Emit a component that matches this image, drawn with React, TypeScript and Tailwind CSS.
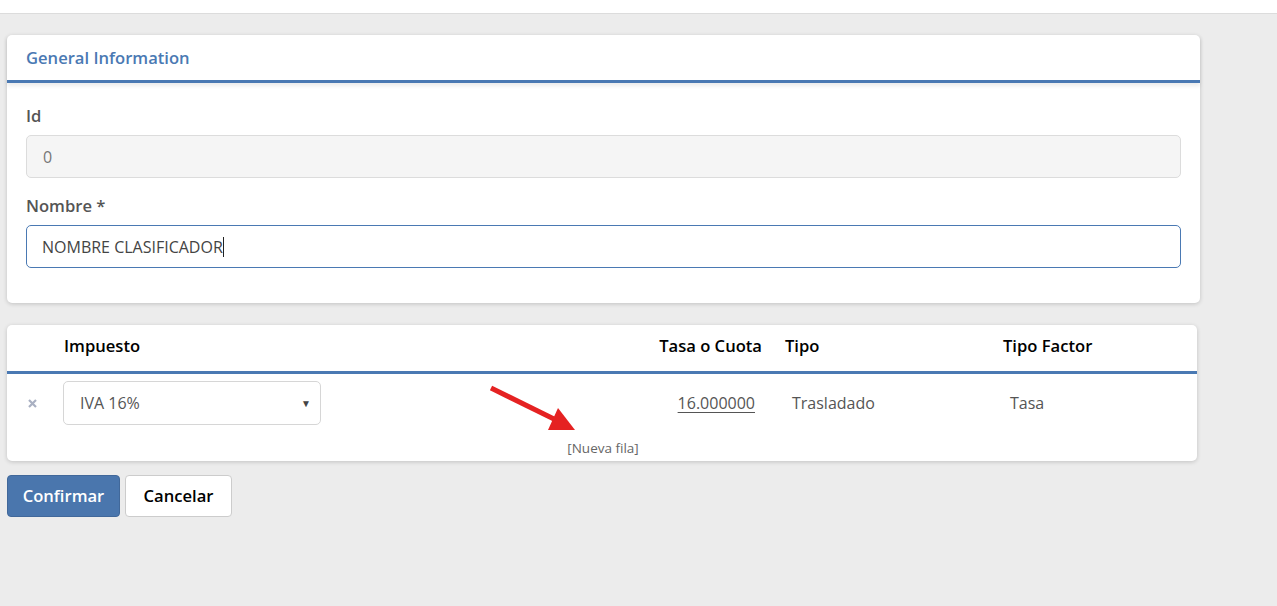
import React from "react";

const font = { fontFamily: "'Open Sans', 'Noto Sans', sans-serif" };

const App: React.FC = () => {
  return (
    <div className="min-h-[606px] bg-[#ececec] text-[#555]" style={font}>
      {/* top bar */}
      <div className="h-[14px] bg-white border-b border-[#dcdcdc]" />

      <div className="pl-[7px] pt-[21px]">
        {/* General Information card */}
        <div className="w-[1193px] bg-white rounded-[5px] shadow-[0_1px_4px_rgba(0,0,0,0.18)]">
          <div className="h-[48px] px-[19px] pt-[11px] border-b-[3px] border-[#4a79b3] shadow-[0_3px_4px_rgba(0,0,0,0.08)]">
            <h1 className="text-[16.6px] font-semibold text-[#4a79b3]">General Information</h1>
          </div>
          <div className="px-[19px] pt-[22px] pb-[35px]">
            <label className="block text-[16.6px] font-semibold leading-[22px]">Id</label>
            <div className="mt-[8px] h-[43px] rounded-[5px] border border-[#dcdcdc] bg-[#f5f5f5] flex items-center px-[16px] text-[16px] text-[#777]">
              0
            </div>
            <label className="block mt-[17px] text-[16.6px] font-semibold leading-[22px]">Nombre *</label>
            <div className="mt-[8px] h-[43px] rounded-[5px] border border-[#4a79b3] bg-white flex items-center px-[15px] text-[16px] text-[#444]">
              NOMBRE CLASIFICADOR
              <span className="inline-block w-px h-[20px] bg-[#222]" />
            </div>
          </div>
        </div>

        {/* Impuestos table card */}
        <div className="relative mt-[22px] w-[1190px] bg-white rounded-[5px] shadow-[0_1px_4px_rgba(0,0,0,0.18)]">
          <div className="h-[49px] flex items-center border-b-[3px] border-[#4a79b3] text-[16.6px] font-semibold text-black pb-[3px]">
            <div className="w-[57px]" />
            <div className="w-[578px]">Impuesto</div>
            <div className="w-[120px] text-right">Tasa o Cuota</div>
            <div className="w-[23px]" />
            <div className="w-[218px]">Tipo</div>
            <div>Tipo Factor</div>
          </div>
          <div className="pt-[7px] flex items-center text-[16px]">
            <div className="w-[50px] flex justify-center">
              <svg width="9" height="9" viewBox="0 0 9 9">
                <path d="M1 1 L8 8 M8 1 L1 8" stroke="#a9b0c2" strokeWidth="2.2" />
              </svg>
            </div>
            <div className="ml-[6px] w-[258px] h-[44px] rounded-[5px] border border-[#d6d6d6] flex items-center justify-between pl-[16px] pr-[9px]">
              <span className="text-[#555]">IVA 16%</span>
              <span className="text-[10px] text-[#444]">▼</span>
            </div>
            <div className="w-[434px] text-right">
              <span className="underline underline-offset-[3px]">16.000000</span>
            </div>
            <div className="w-[37px]" />
            <div className="w-[218px]">Trasladado</div>
            <div>Tasa</div>
          </div>
          <div className="h-[36px] flex items-end justify-center pb-[3px] text-[13.5px] text-[#666] pl-[2px]">
            [Nueva fila]
          </div>

          {/* red annotation arrow */}
          <svg
            className="absolute left-[473px] top-[58px]"
            width="110"
            height="60"
            viewBox="0 0 110 60"
          >
            <line x1="11" y1="5" x2="76" y2="37" stroke="#e52222" strokeWidth="5" />
            <polygon points="78,25 68,47 95,47" fill="#e52222" />
          </svg>
        </div>

        {/* buttons */}
        <div className="mt-[14px] flex gap-[5px]">
          <button className="w-[113px] h-[42px] rounded-[4px] bg-[#4a76ad] border border-[#41689a] text-white text-[16.6px] font-semibold">
            Confirmar
          </button>
          <button className="w-[107px] h-[42px] rounded-[4px] bg-white border border-[#ccc] text-black text-[16.6px] font-semibold">
            Cancelar
          </button>
        </div>
      </div>
    </div>
  );
};

export default App;
